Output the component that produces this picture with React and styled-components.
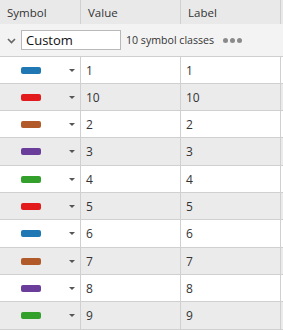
import React from "react";
import styled, { createGlobalStyle } from "styled-components";

const Global = createGlobalStyle`
  html, body { margin: 0; padding: 0; background: #ffffff; }
  body { font-family: "Open Sans", "Noto Sans", sans-serif; font-size: 12px; color: #333; }
`;

const Table = styled.div`
  width: 283px;
  height: 330px;
  overflow: hidden;
  background: #fff;
`;

const HeaderRow = styled.div`
  display: grid;
  grid-template-columns: 81px 100px 100px 2px;
  height: 24px;
  background: #e9e9e9;
  box-sizing: border-box;
`;

const HeaderCell = styled.div`
  display: flex;
  align-items: center;
  padding-left: 7px;
  border-right: 1px solid #d0d0d0;
  color: #333;
  font-size: 11.5px;
  box-sizing: border-box;
`;

const GroupRow = styled.div`
  display: flex;
  align-items: center;
  height: 33px;
  background: #f3f3f3;
  border-bottom: 1px solid #cfcfcf;
  box-sizing: border-box;
  padding-left: 7px;
`;

const Chevron = styled.svg`
  width: 9px;
  height: 6px;
  margin-right: 5px;
  margin-top: 1px;
`;

const NameInput = styled.div`
  width: 100px;
  height: 20px;
  box-sizing: border-box;
  background: #fff;
  border: 1px solid #b9b9b9;
  display: flex;
  align-items: center;
  padding-left: 4px;
  font-size: 13px;
  color: #111;
`;

const Count = styled.span`
  margin-left: 5px;
  font-size: 10.6px;
  color: #333;
`;

const Dots = styled.span`
  margin-left: 9px;
  display: flex;
  gap: 2px;
`;

const Dot = styled.span`
  width: 5px;
  height: 5px;
  border-radius: 50%;
  background: #8a8a8a;
`;

const Row = styled.div`
  display: grid;
  grid-template-columns: 81px 100px 100px 2px;
  height: ${(p) => p.$h}px;
  background: ${(p) => (p.$alt ? "#ebebeb" : "#ffffff")};
  border-bottom: 1px solid #d0d0d0;
  box-sizing: border-box;
`;

const Cell = styled.div`
  display: flex;
  align-items: center;
  padding-left: 5px;
  border-right: 1px solid #d0d0d0;
  box-sizing: border-box;
  font-size: 12px;
  color: #333;
`;

const SymbolCell = styled(Cell)`
  padding-left: 21px;
`;

const Swatch = styled.span`
  width: 20px;
  height: 7px;
  border-radius: 2px;
  background: ${(p) => p.$color};
`;

const Caret = styled.span`
  margin-left: 28px;
  width: 0;
  height: 0;
  border-left: 3px solid transparent;
  border-right: 3px solid transparent;
  border-top: 3px solid #555;
`;

const Spacer = styled.div``;

const C = {
  blue: "#1f78b4",
  red: "#e31a1c",
  brown: "#b15928",
  purple: "#6a3d9a",
  green: "#33a02c",
};

const rows = [
  { v: "1", c: C.blue },
  { v: "10", c: C.red },
  { v: "2", c: C.brown },
  { v: "3", c: C.purple },
  { v: "4", c: C.green },
  { v: "5", c: C.red },
  { v: "6", c: C.blue },
  { v: "7", c: C.brown },
  { v: "8", c: C.purple },
  { v: "9", c: C.green },
];

const heights = [27, 27, 27, 28, 27, 27, 28, 27, 27, 28];

export default function App() {
  return (
    <>
      <Global />
      <Table>
        <HeaderRow>
          <HeaderCell>Symbol</HeaderCell>
          <HeaderCell>Value</HeaderCell>
          <HeaderCell>Label</HeaderCell>
          <Spacer />
        </HeaderRow>
        <GroupRow>
          <Chevron viewBox="0 0 9 6">
            <path d="M1 1 L4.5 4.5 L8 1" fill="none" stroke="#666" strokeWidth="1.6" />
          </Chevron>
          <NameInput>Custom</NameInput>
          <Count>10 symbol classes</Count>
          <Dots>
            <Dot />
            <Dot />
            <Dot />
          </Dots>
        </GroupRow>
        {rows.map((r, i) => (
          <Row key={i} $alt={i % 2 === 1} $h={heights[i]}>
            <SymbolCell>
              <Swatch $color={r.c} />
              <Caret />
            </SymbolCell>
            <Cell>{r.v}</Cell>
            <Cell>{r.v}</Cell>
            <Spacer />
          </Row>
        ))}
      </Table>
    </>
  );
}
